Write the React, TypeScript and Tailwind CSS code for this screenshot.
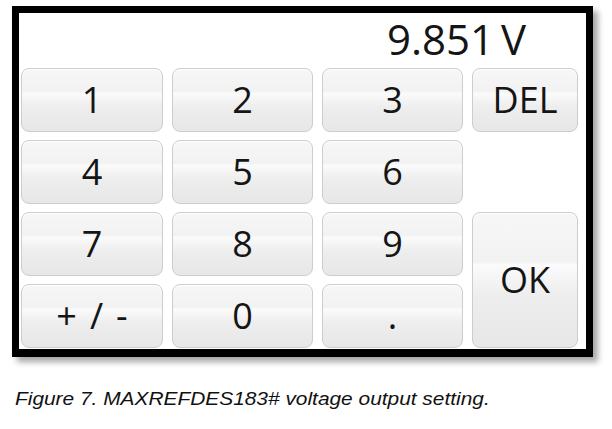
import React from "react";

const btn =
  "flex items-center justify-center rounded-[8px] border border-[#cdcdcd] bg-[linear-gradient(to_bottom,#f7f7f7_0%,#f2f2f2_36%,#fbfbfb_39%,#eeeeee_60%,#e7e7e7_100%)] text-[36px] leading-none text-[#151515] shadow-[inset_0_1px_0_#ffffff]";

export default function App() {
  const keys: { label: React.ReactNode; cls?: string }[] = [
    { label: "1" },
    { label: "2" },
    { label: "3" },
    { label: "DEL" },
    { label: "4" },
    { label: "5" },
    { label: "6" },
    { label: "", cls: "invisible" },
    { label: "7" },
    { label: "8" },
    { label: "9" },
    { label: "OK", cls: "row-span-2" },
    {
      label: (
        <span className="flex items-center gap-[13px]">
          <span>+</span>
          <span>/</span>
          <span>-</span>
        </span>
      ),
    },
    { label: "0" },
    { label: "." },
  ];
  return (
    <div className="w-[612px] h-[429px] bg-white overflow-hidden">
      <div className="pt-[6px] pl-[12px]">
        <div
          className="w-[581px] h-[351px] border-[7px] border-b-[8px] border-black bg-white shadow-[5px_5px_6px_rgba(0,0,0,0.35)] flex flex-col pl-[2px] pr-[7px] pb-[1px]"
          style={{ fontFamily: '"Open Sans", "Noto Sans", sans-serif' }}
        >
          <div className="h-[55px] flex justify-end pr-[53px] pt-[4px]">
            <span className="text-[42px] leading-[43px] text-[#151515]">9.851&thinsp;V</span>
          </div>
          <div className="grid grid-cols-[142px_141px_141px_106px] grid-rows-[64px_64px_64px_64px] gap-x-[9px] gap-y-[8px]">
            {keys.map((k, i) => (
              <div key={i} className={`${btn} ${k.cls ?? ""}`}>
                {k.label}
              </div>
            ))}
          </div>
        </div>
      </div>
      <div className="mt-[32px] pl-[15px]">
        <div
          className="origin-left scale-x-[1.16] whitespace-nowrap text-[18px] leading-[20px] italic text-[#111111]"
          style={{ fontFamily: '"Liberation Sans", Arial, sans-serif' }}
        >
          Figure 7. MAXREFDES183# voltage output setting.
        </div>
      </div>
    </div>
  );
}
